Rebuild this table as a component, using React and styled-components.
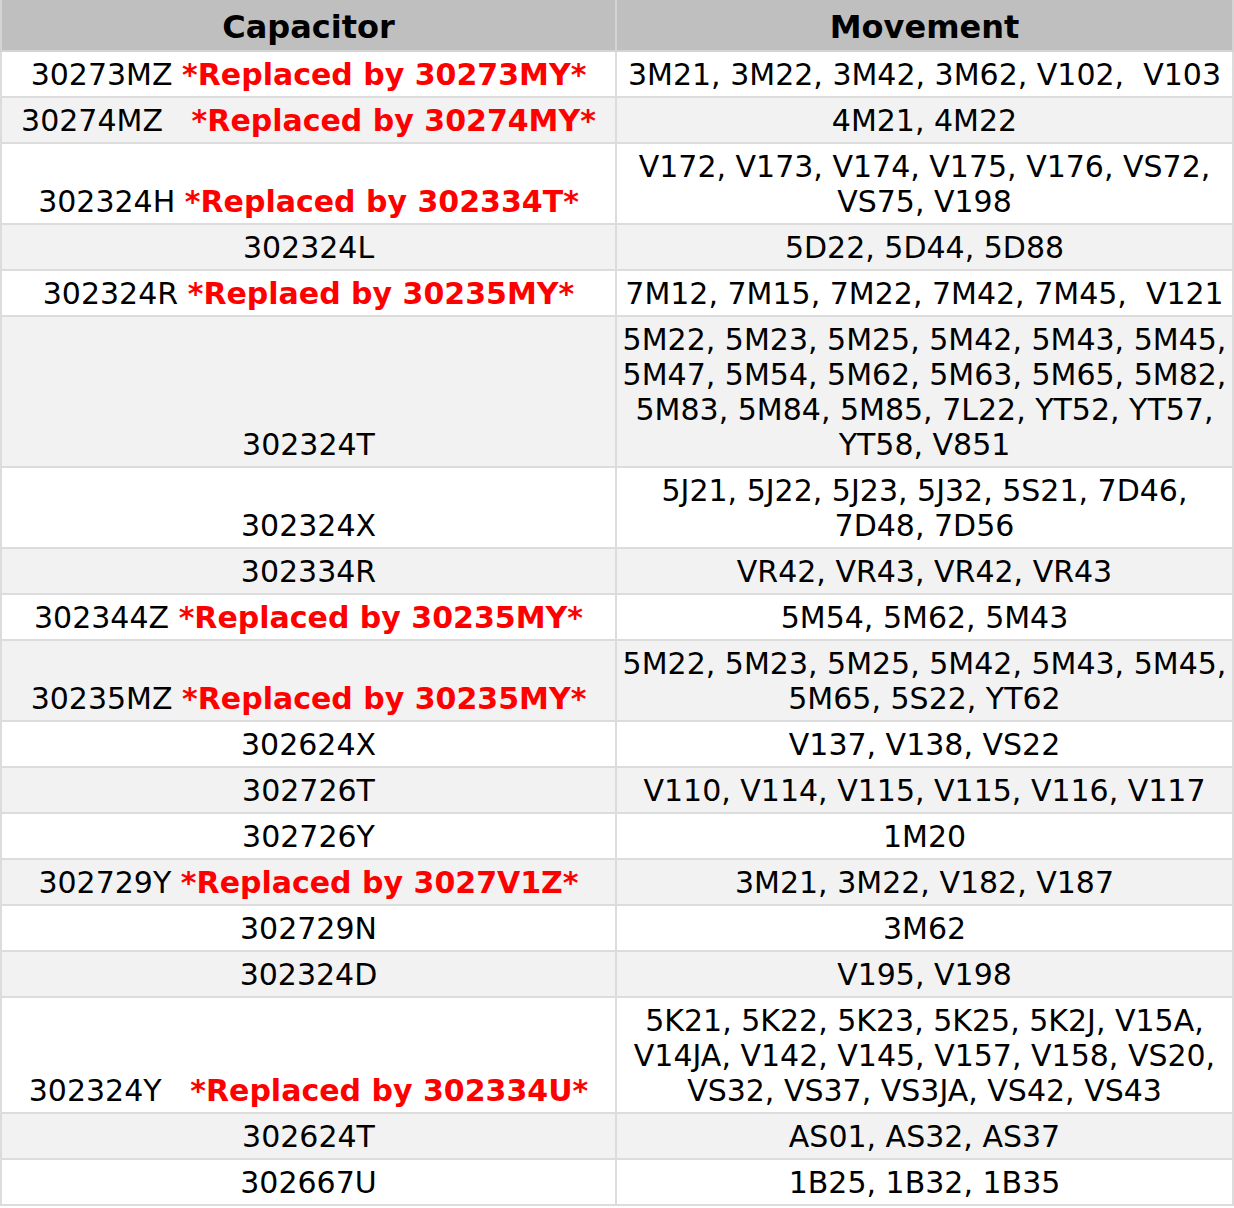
import React from 'react';
import styled, { createGlobalStyle } from 'styled-components';

const GlobalStyle = createGlobalStyle`
    html, body {
        margin: 0;
        padding: 0;
        background: #ffffff;
    }
    body {
        font-family: "DejaVu Sans", Verdana, sans-serif;
    }
`;

const rows = [
    { code: '30273MZ', note: 'Replaced by 30273MY', movement: '3M21, 3M22, 3M42, 3M62, V102,\u00a0 V103' },
    { code: '30274MZ', gap: true, note: 'Replaced by 30274MY', movement: '4M21, 4M22' },
    { code: '302324H', note: 'Replaced by 302334T', movement: 'V172, V173, V174, V175, V176, VS72, VS75, V198' },
    { code: '302324L', movement: '5D22, 5D44, 5D88' },
    { code: '302324R', note: 'Replaed by 30235MY', movement: '7M12, 7M15, 7M22, 7M42, 7M45,\u00a0 V121' },
    { code: '302324T', movement: '5M22, 5M23, 5M25, 5M42, 5M43, 5M45, 5M47, 5M54, 5M62, 5M63, 5M65, 5M82, 5M83, 5M84, 5M85, 7L22, YT52, YT57, YT58, V851' },
    { code: '302324X', movement: '5J21, 5J22, 5J23, 5J32, 5S21, 7D46, 7D48, 7D56' },
    { code: '302334R', movement: 'VR42, VR43, VR42, VR43' },
    { code: '302344Z', note: 'Replaced by 30235MY', movement: '5M54, 5M62, 5M43' },
    { code: '30235MZ', note: 'Replaced by 30235MY', movement: '5M22, 5M23, 5M25, 5M42, 5M43, 5M45, 5M65, 5S22, YT62' },
    { code: '302624X', movement: 'V137, V138, VS22' },
    { code: '302726T', movement: 'V110, V114, V115, V115, V116, V117' },
    { code: '302726Y', movement: '1M20' },
    { code: '302729Y', note: 'Replaced by 3027V1Z', movement: '3M21, 3M22, V182, V187' },
    { code: '302729N', movement: '3M62' },
    { code: '302324D', movement: 'V195, V198' },
    { code: '302324Y', gap: true, note: 'Replaced by 302334U', movement: '5K21, 5K22, 5K23, 5K25, 5K2J, V15A, V14JA, V142, V145, V157, V158, VS20, VS32, VS37, VS3JA, VS42, VS43' },
    { code: '302624T', movement: 'AS01, AS32, AS37' },
    { code: '302667U', movement: '1B25, 1B32, 1B35' },
];

const Table = styled.table`
    width: 1234px;
    border-collapse: collapse;
    table-layout: fixed;
    color: #000000;
`;

const HeadCell = styled.th`
    background: #bfbfbf;
    border: 2px solid #d4d4d4;
    border-top: none;
    font-size: 32px;
    font-weight: bold;
    line-height: 38px;
    padding: 8px 4px 4px;
    text-align: center;
`;

const Row = styled.tr`
    background: ${(p) => (p.$shaded ? '#f2f2f2' : '#ffffff')};
`;

const Cell = styled.td`
    border: 2px solid #dcdcdc;
    font-size: 30px;
    line-height: 35px;
    padding: 5px 4px 4px;
    text-align: center;
    vertical-align: ${(p) => p.$align};
    white-space: ${(p) => (p.$nowrap ? 'nowrap' : 'normal')};
`;

const Note = styled.span`
    color: #ff0000;
    font-weight: bold;
`;

function CapacitorCell({ code, note, gap }) {
    return (
        <Cell $align="bottom" $nowrap>
            {code}
            {note && (
                <>
                    {gap ? '\u00a0\u00a0 ' : ' '}
                    <Note>*{note}*</Note>
                </>
            )}
        </Cell>
    );
}

export default function App() {
    return (
        <>
            <GlobalStyle />
            <Table>
                <colgroup>
                    <col style={{ width: 615 }} />
                    <col />
                </colgroup>
                <thead>
                    <tr>
                        <HeadCell>Capacitor</HeadCell>
                        <HeadCell>Movement</HeadCell>
                    </tr>
                </thead>
                <tbody>
                    {rows.map((row, i) => (
                        <Row key={row.code} $shaded={i % 2 === 1}>
                            <CapacitorCell code={row.code} note={row.note} gap={row.gap} />
                            <Cell $align="middle">{row.movement}</Cell>
                        </Row>
                    ))}
                </tbody>
            </Table>
        </>
    );
}
